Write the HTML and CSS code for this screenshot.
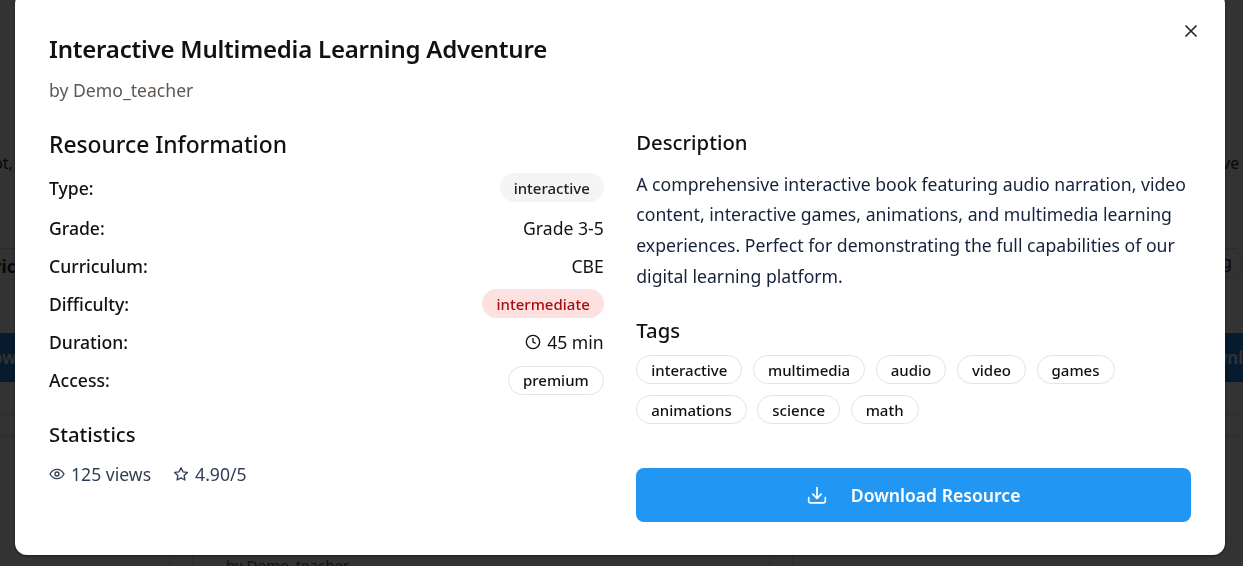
FILE: index.html
```html
<!DOCTYPE HTML><html>
<head>
  <meta name="viewport" content="width=device-width, initial-scale=1">
  <title>Resource details</title>
  <link rel="stylesheet" href="styles.css">
</head>
<body>
  <div class="behind">
    <div class="behindText"><span>pt,</span><span>ve r</span></div>
    <div class="behindRow"><b>ric</b><span class="behindPill">g</span></div>
    <div class="behindBtns"><span>ow</span><span>wnl</span></div>
    <div class="behindLine"></div>
    <div class="behindOuter"><div class="behindCard">by Demo_teacher</div></div>
  </div>
  <div class="overlay">
  <div class="modal">
    <button type="button" class="close" aria-label="Close">
      <svg width="24" height="24" viewBox="0 0 24 24" fill="none" stroke="currentColor" stroke-width="1.6"><path d="M6.5 6.5l11 11M17.5 6.5l-11 11"/></svg>
    </button>
    <h1>Interactive Multimedia Learning Adventure</h1>
    <p class="author">by Demo_teacher</p>
    <div class="columns">
      <div class="left">
        <h2>Resource Information</h2>
        <div class="info">
          <div class="row r1"><b>Type:</b><span class="chip grey">interactive</span></div>
          <div class="row"><b>Grade:</b><span>Grade 3-5</span></div>
          <div class="row"><b>Curriculum:</b><span>CBE</span></div>
          <div class="row"><b>Difficulty:</b><span class="chip red">intermediate</span></div>
          <div class="row"><b>Duration:</b><span class="iconText">
            <svg width="16" height="16" viewBox="0 0 24 24" fill="none" stroke="currentColor" stroke-width="2"><circle cx="12" cy="12" r="10"/><path d="M12 6v6l4 2"/></svg>45 min</span></div>
          <div class="row"><b>Access:</b><span class="chip outline">premium</span></div>
        </div>
        <h3 class="statsHead">Statistics</h3>
        <div class="stats">
          <span class="iconText"><svg width="16" height="16" viewBox="0 0 24 24" fill="none" stroke="currentColor" stroke-width="2"><path d="M1.5 12S5.5 5 12 5s10.500 7 10.500 7-4 7-10.500 7S1.500 12 1.500 12z"/><circle cx="12" cy="12" r="3"/></svg>125 views</span>
          <span class="iconText"><svg width="16" height="16" viewBox="0 0 24 24" fill="none" stroke="currentColor" stroke-width="2" stroke-linejoin="round"><path d="M12 2.500l2.900 6.200 6.700.9-4.900 4.700 1.200 6.700-5.900-3.300-5.900 3.300 1.200-6.700-4.900-4.700 6.700-.9z"/></svg>4.90/5</span>
        </div>
      </div>
      <div class="right">
        <h3>Description</h3>
        <p class="desc">A comprehensive interactive book featuring audio narration, video content, interactive games, animations, and multimedia learning experiences. Perfect for demonstrating the full capabilities of our digital learning platform.</p>
        <h3 class="tagsHead">Tags</h3>
        <div class="tags">
          <span class="chip outline">interactive</span>
          <span class="chip outline">multimedia</span>
          <span class="chip outline">audio</span>
          <span class="chip outline">video</span>
          <span class="chip outline">games</span>
          <span class="chip outline">animations</span>
          <span class="chip outline">science</span>
          <span class="chip outline">math</span>
        </div>
        <button type="button" class="download">
          <svg width="20" height="20" viewBox="0 0 24 24" fill="none" stroke="currentColor" stroke-width="2" stroke-linecap="round" stroke-linejoin="round"><path d="M12 3v13M7 11l5 5 5-5M2 15v4a2.500 2.500 0 0 0 2.500 2.500h15A2.500 2.500 0 0 0 22 19v-4"/></svg>
          Download Resource
        </button>
      </div>
    </div>
  </div>
  </div>
</body>
</html>
```

FILE: styles.css
```css
html, body {margin: 0; height: 100%; overflow: hidden;}
body {font-family: "Noto Sans", "Open Sans", sans-serif; background-color: #fff; color: #111;}

/* page under the dialog, only the edges show */
.behind {height: 566px; overflow: hidden; font-size: 17px; color: #1a2a40;}
.behindText {display: flex; justify-content: space-between; padding-top: 152px; height: 96px; margin-left: -7px; margin-right: -7px; font-size: 16px; border-bottom: 1px solid #ddd;}
.behindRow {display: flex; justify-content: space-between; align-items: center; height: 34px; margin-left: -6px;}
.behindPill {border: 1px solid #ddd; border-radius: 14px; padding: 0 10px 0 30px; height: 27px; margin-bottom: 6px; margin-right: 0;}
.behindBtns {display: flex; justify-content: space-between; align-items: center; margin: 50px 0 0 -8px; padding: 0; height: 49px; background-color: #1e88e5; color: #fff; font-weight: 600;}
.behindLine {margin-top: 32px; height: 21px; border-top: 1px solid #ddd; border-bottom: 1px solid #ddd;}
.behindOuter {margin: 0 450px 0 169px; height: 200px; border-left: 1px solid #ddd; border-right: 1px solid #ddd; padding: 0 22px;}
.behindCard {height: 200px; border-left: 1px solid #ddd; border-right: 1px solid #ddd; padding: 118px 0 0 33px; box-sizing: border-box; font-size: 15px; color: #555;}

.overlay {position: fixed; top: 0; left: 0; right: 0; bottom: 0; background-color: rgba(0,0,0,.8); overflow: hidden;}
.modal {position: absolute; left: 15px; right: 18px; top: -8px; height: 563px; box-sizing: border-box; background-color: #fff; border-radius: 12px; padding: 39px 34px 0 34px; box-shadow: 0 1px 3px rgba(0,0,0,.5);}
.close {position: absolute; top: 27px; right: 22px; width: 24px; height: 24px; padding: 0; border: none; background: none; color: #222; cursor: pointer;}

h1 {font-size: 24px; font-weight: 600; line-height: 36px; letter-spacing: -.22px; margin: 0;}
.author {font-size: 17.6px; line-height: 26px; color: #5f5750; margin: 10px 0 0 0;}
.columns {display: flex; gap: 32.500px; margin-top: 24px;}
.left, .right {flex: 1; min-width: 0;}

h2 {font-size: 22.800px; font-weight: 500; line-height: 32px; margin: 2px 0 0 0;}
h3 {font-size: 20.300px; font-weight: 500; line-height: 30px; margin: 0;}

.info {margin-top: 5.500px;}
.row {display: flex; justify-content: space-between; align-items: center; height: 38.200px; font-size: 17.6px;}
.row b {font-weight: 500;}
.row.r1 {height: 42px;}

.chip {display: inline-flex; align-items: center; height: 29px; box-sizing: border-box; padding: 0 14px; border-radius: 15px; font-size: 15px; font-weight: 500;}
.grey {background-color: #f4f4f4; color: #222;}
.red {background-color: #fde1e1; color: #a50e0e;}
.outline {border: 1px solid #e2e2e2; background-color: #fff; color: #111;}

.iconText {display: inline-flex; align-items: center; gap: 6px;}
.statsHead {margin-top: 19.500px;}
.stats {display: flex; gap: 22px; margin-top: 13.500px; font-size: 17.6px; color: #2f3e55;}

.desc {font-size: 17.65px; line-height: 30.700px; color: #14233a; margin: 11.500px 0 0 0;}
.tagsHead {margin-top: 24px;}
.tags {display: flex; flex-wrap: wrap; gap: 11px 10.600px; margin-top: 10px;}
.download {display: flex; align-items: center; justify-content: center; gap: 24px; width: 100%; height: 54px; margin-top: 44px; border: none; border-radius: 8px; background-color: #2196f3; color: #fff; font-family: inherit; font-size: 17.6px; font-weight: 600; cursor: pointer;}
```
